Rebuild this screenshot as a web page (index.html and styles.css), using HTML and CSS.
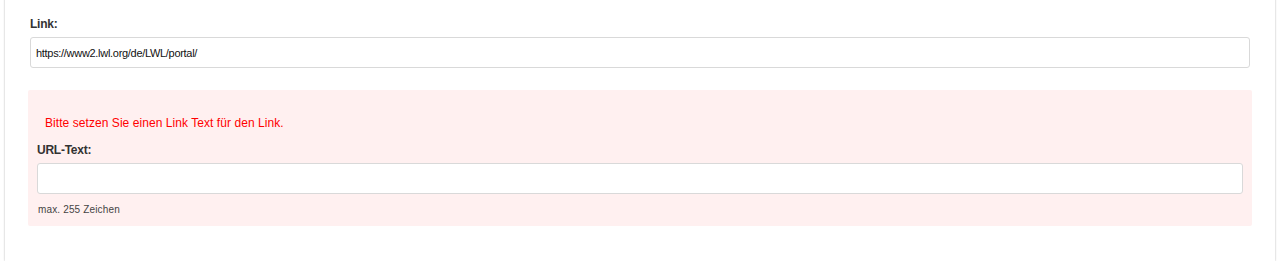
FILE: index.html
```html
<!DOCTYPE html>
<html lang="de">
<head>
<meta charset="utf-8">
<title>Link</title>
<link rel="stylesheet" href="styles.css">
</head>
<body>
<div class="card">
  <div class="field link-field">
    <label class="label" for="link">Link:</label>
    <input class="input" id="link" type="text" value="https://www2.lwl.org/de/LWL/portal/">
  </div>
  <div class="error-box">
    <div class="error-msg">Bitte setzen Sie einen Link Text für den Link.</div>
    <label class="label" for="urltext">URL-Text:</label>
    <input class="input" id="urltext" type="text" value="">
    <div class="help">max. 255 Zeichen</div>
  </div>
</div>
</body>
</html>
```
FILE: styles.css
```css
html, body {
  margin: 0;
  padding: 0;
  background: #ffffff;
  font-family: "Liberation Sans", Arial, Helvetica, sans-serif;
}
body {
  padding: 0 5px;
}
.card {
  background: #ffffff;
  box-shadow: 0 0 2px rgba(0, 0, 0, 0.22), 0 1px 2px rgba(0, 0, 0, 0.08);
  margin-top: -4px;
  padding: 20px 23px 35px 23px;
}
.field {
  display: flex;
  flex-direction: column;
}
.link-field {
  margin: 0 2px;
}
.label {
  display: block;
  font-size: 12px;
  line-height: 17px;
  font-weight: bold;
  color: #333333;
  letter-spacing: -0.25px;
  margin-bottom: 4px;
}
.input {
  display: block;
  box-sizing: border-box;
  width: 100%;
  height: 31px;
  margin: 0;
  border: 1px solid #d9d9d9;
  border-radius: 3px;
  background: #ffffff;
  padding: 0 5px;
  font-family: "Liberation Sans", Arial, Helvetica, sans-serif;
  font-size: 11px;
  letter-spacing: -0.3px;
  color: #111111;
  outline: none;
}
.error-box {
  margin-top: 22px;
  background: #fff0f0;
  border-radius: 2px;
  padding: 25px 9px 9px 9px;
}
.error-msg {
  font-size: 12px;
  line-height: 17px;
  letter-spacing: 0.06px;
  color: #ff0000;
  padding-left: 8px;
  margin-bottom: 10px;
}
.help {
  margin-top: 9px;
  padding-left: 1px;
  font-size: 10px;
  line-height: 14px;
  letter-spacing: 0.15px;
  color: #444444;
}
```
